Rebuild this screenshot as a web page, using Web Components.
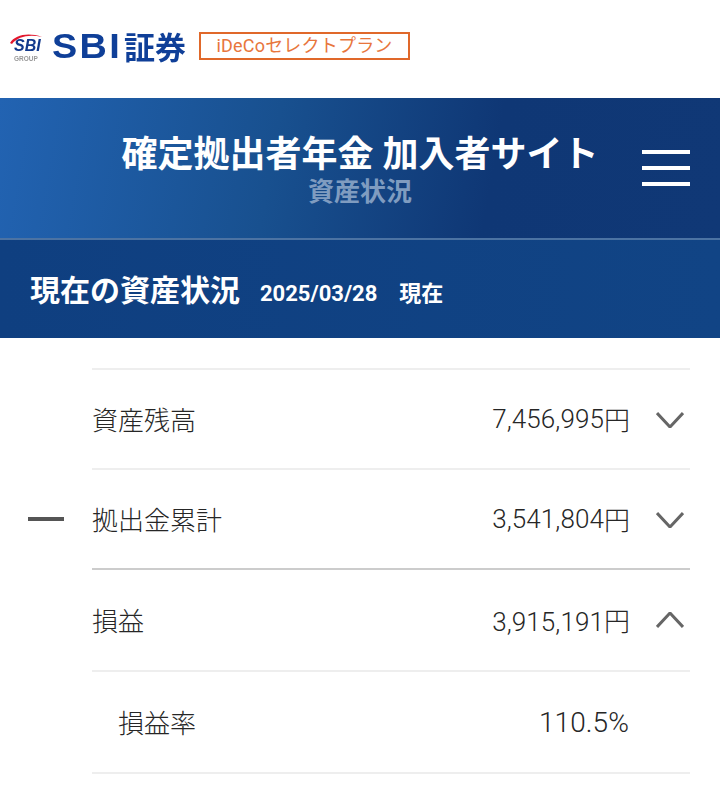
<!DOCTYPE html>
<html lang="ja">
<head>
<meta charset="utf-8">
<style>
  html, body { margin: 0; padding: 0; background: #fff; }
  body { width: 720px; height: 785px; overflow: hidden; font-family: Roboto, "Noto Sans CJK JP", sans-serif; }
</style>
</head>
<body>
<site-logo></site-logo>
<site-header title-text="確定拠出者年金 加入者サイト" sub-text="資産状況"></site-header>
<section-bar date="2025/03/28">現在の資産状況</section-bar>
<asset-list>
  <asset-row label="資産残高" value="7,456,995" unit="円" icon="down"></asset-row>
  <asset-row label="拠出金累計" value="3,541,804" unit="円" icon="down" minus strong></asset-row>
  <asset-row label="損益" value="3,915,191" unit="円" icon="up" tall></asset-row>
  <asset-row label="損益率" value="110.5%" child tall></asset-row>
</asset-list>

<script>
  class siteLogo extends HTMLElement{
    constructor(){
      super()
      this.attachShadow({mode: 'open'}).innerHTML = `
        <style>
          :host{ display: flex; align-items: center; height: 98px; box-sizing: border-box; padding: 0 0 7px 10px; }
          svg{ display: block; flex: none; filter: blur(.3px); }
          .name{ margin-left: 6px; width: 136px; display: flex; align-items: center; color: #0f3f98; font: 700 35px/40px "Liberation Sans", sans-serif; white-space: nowrap; filter: blur(.4px); }
          .sbi{ display: inline-block; width: 72px; letter-spacing: 2.2px; transform: scaleX(1.08); transform-origin: left center; }
          .sec{ font: 700 31px/40px "Noto Sans CJK JP", sans-serif; }
          .tag{ margin-left: 11px; width: 211px; height: 28px; box-sizing: border-box; border: 2px solid #e0682a; color: #e8763c; display: flex; align-items: center; justify-content: center; font: 400 18px/24px Roboto, "Noto Sans CJK JP", sans-serif; letter-spacing: .2px; }
        </style>
        <svg width="36" height="32" viewBox="0 -1 36 32">
          <path d="M0 12C5 4 18 1 32 6C20 3 8 5 2 13Z" fill="#e3172d"/>
          <text x="4" y="20" font-family="Liberation Sans" font-size="16" font-weight="700" font-style="italic" fill="#12398c">SBI</text>
          <text x="4" y="30" font-family="Liberation Sans" font-size="6.5" font-weight="700" fill="#999">GROUP</text>
        </svg>
        <div class="name"><span class="sbi">SBI</span><span class="sec">証券</span></div>
        <div class="tag">iDeCoセレクトプラン</div>`
    }
  }
  customElements.define('site-logo', siteLogo)

  class siteHeader extends HTMLElement{
    connectedCallback(){
      this.attachShadow({mode: 'open'}).innerHTML = `
        <style>
          :host{ display: block; position: relative; height: 142px; box-sizing: border-box; border-bottom: 2px solid #4c73a3; background: linear-gradient(100deg, #2263b2 0%, #18508f 38%, #0f3775 68%, #103876 100%); text-align: center; color: #fff; font-family: Roboto, "Noto Sans CJK JP", sans-serif; }
          h1{ margin: 0; padding-top: 34px; font-size: 36px; line-height: 46px; font-weight: 700; }
          p{ margin: -2px 0 0; font-size: 26px; line-height: 32px; font-weight: 700; color: #7f9cc0; }
          .menu{ position: absolute; left: 642px; top: 52px; width: 48px; height: 36px; display: flex; flex-direction: column; justify-content: space-between; }
          .menu i{ display: block; height: 4px; background: #fff; }
        </style>
        <h1>${this.getAttribute('title-text')}</h1>
        <p>${this.getAttribute('sub-text')}</p>
        <div class="menu"><i></i><i></i><i></i></div>`
    }
  }
  customElements.define('site-header', siteHeader)

  class sectionBar extends HTMLElement{
    connectedCallback(){
      this.attachShadow({mode: 'open'}).innerHTML = `
        <style>
          :host{ display: flex; align-items: baseline; height: 98px; box-sizing: border-box; padding: 30px 0 0 30px; background: linear-gradient(90deg, #0f3f80, #114485); color: #fff; font-family: Roboto, "Noto Sans CJK JP", sans-serif; font-weight: 700; }
          .main{ font-size: 30px; line-height: 42px; }
          .date{ margin-left: 20px; font-size: 22px; line-height: 42px; }
          .now{ margin-left: 22px; font-size: 22px; line-height: 42px; }
        </style>
        <span class="main"><slot></slot></span>
        <span class="date">${this.getAttribute('date')}</span>
        <span class="now">現在</span>`
    }
  }
  customElements.define('section-bar', sectionBar)

  class assetList extends HTMLElement{
    constructor(){
      super()
      this.attachShadow({mode: 'open'}).innerHTML = `
        <style>
          :host{ display: block; margin: 30px 30px 0 92px; border-top: 2px solid #eee; }
        </style>
        <slot></slot>`
    }
  }
  customElements.define('asset-list', assetList)

  class assetRow extends HTMLElement{
    connectedCallback(){
      const icon = this.getAttribute('icon')
      const arrow = icon == 'down' ? 'M1 1L14 15L27 1' : 'M1 15L14 1L27 15'
      const svg = icon ? `<svg width="28" height="16" viewBox="0 0 28 16"><path d="${arrow}" fill="none" stroke="#666" stroke-width="3"/></svg>` : ''
      const unit = this.getAttribute('unit') || ''
      this.attachShadow({mode: 'open'}).innerHTML = `
        <style>
          :host{ display: flex; align-items: center; position: relative; padding-bottom: 2px; box-sizing: border-box; height: 100px; border-bottom: 2px solid #eee; color: #262626; font-family: Roboto, "Noto Sans CJK JP", sans-serif; font-size: 26px; font-weight: 300; }
          :host([tall]){ height: 102px; }
          :host([strong]){ border-bottom-color: #ccc; }
          :host([child]){ padding-left: 26px; }
          .label{ flex: 1; }
          .value{ margin-right: 60px; }
          :host([child]) .value{ margin-right: 61px; font-size: 28px; padding-top: 3px; }
          .num{ vertical-align: 2px; letter-spacing: .1px; }
          :host([tall]) .num{ vertical-align: 0; }
          svg{ position: absolute; right: 6px; top: 42px; }
          .minus{ position: absolute; left: -64px; top: 47px; width: 36px; height: 4px; background: #555; }
        </style>
        ${this.hasAttribute('minus') ? '<div class="minus"></div>' : ''}
        <span class="label">${this.getAttribute('label')}</span>
        <span class="value"><span class="num">${this.getAttribute('value')}</span><span class="unit">${unit}</span></span>
        ${svg}`
    }
  }
  customElements.define('asset-row', assetRow)
</script>
</body>
</html>
